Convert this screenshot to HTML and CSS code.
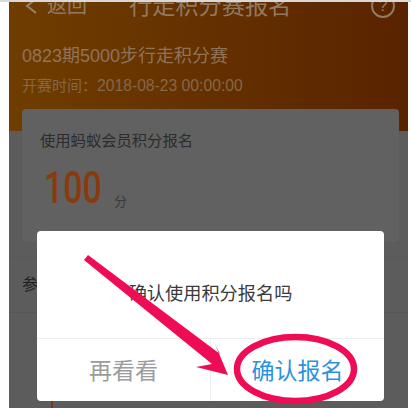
FILE: index.html
```html
<!DOCTYPE html>
<html lang="zh">
<head>
<meta charset="utf-8">
<title>行走积分赛报名</title>
<link rel="stylesheet" href="styles.css">
</head>
<body>
<div class="topline"></div>
<main class="screen">
  <div class="soft">
    <section class="hero">
      <nav class="nav">
        <svg class="back" viewBox="0 0 14 18" aria-hidden="true"><path d="M12 2 L3 9 L12 16"/></svg>
        <span class="back-text">返回</span>
        <span class="title">行走积分赛报名</span>
        <span class="help">?</span>
      </nav>
      <h1 class="name">0823期5000步行走积分赛</h1>
      <p class="time">开赛时间：<span class="date">2018-08-23 00:00:00</span></p>
    </section>
    <section class="card">
      <p class="card-label">使用蚂蚁会员积分报名</p>
      <p class="points"><span class="num">100</span><span class="unit">分</span></p>
    </section>
    <section class="list-row"><span>参赛</span></section>
    <div class="tick"></div>
    <div class="dialog">
      <p class="msg">确认使用积分报名吗</p>
      <div class="actions">
        <span class="btn btn-cancel">再看看</span>
        <span class="btn btn-ok">确认报名</span>
      </div>
    </div>
    <svg class="mark" viewBox="0 0 399 406" aria-hidden="true">
      <polygon class="mark-fill" points="75,258 79,253 211,352 206,342 219,373 187,365 203,362"/>
      <ellipse class="mark-ring" cx="286.5" cy="367" rx="58.5" ry="32"/>
    </svg>
  </div>
</main>
</body>
</html>
```
FILE: styles.css
```css
* { box-sizing: border-box; }
html, body { margin: 0; padding: 0; background: #fff; }
body { width: 411px; height: 408px; overflow: hidden; font-family: "Liberation Sans", "Noto Sans CJK SC", sans-serif; }
.topline { height: 2px; background: #d9d9d9; }
.screen { position: relative; width: 399px; height: 406px; margin-left: 9px; overflow: hidden; background: #5c5c5c; }
.soft { position: relative; filter: blur(0.6px); height: 100%; }
.hero { height: 129px; padding: 0 13px; background: linear-gradient(90deg, #6f3d00, #5a2300); color: #927a60; overflow: hidden; }
.nav { position: relative; display: flex; align-items: center; height: 16px; }
.back { width: 14px; height: 18px; margin: -8px 0 0 2px; fill: none; stroke: #97826b; stroke-width: 2; }
.back-text { margin: -8px 0 0 9px; font-size: 20px; line-height: 24px; }
.title { position: absolute; left: 107px; top: -8px; font-size: 23.2px; line-height: 24px; white-space: nowrap; }
.help { position: absolute; right: 0; top: -8px; width: 24px; height: 24px; border: 2px solid #927a60; border-radius: 50%; font-size: 16px; line-height: 20px; text-align: center; }
.name { margin: 26px 0 0; font-size: 18px; line-height: 24px; font-weight: 400; color: #8f7459; white-space: nowrap; }
.time { margin: 9px 0 0; font-size: 15px; line-height: 18px; color: #866749; white-space: nowrap; }
.date { font-size: 15.7px; }
.card { position: absolute; left: 13px; top: 107px; width: 377px; height: 133px; padding: 22px 18px 0; background: #616161; border-radius: 4px; }
.card-label { margin: 0; font-size: 15.3px; line-height: 20px; color: #2c2c2c; }
.points { display: flex; align-items: flex-end; margin: 15px 0 0 4px; height: 44px; }
.num { margin-right: -17px; font-size: 44px; line-height: 44px; font-weight: 500; font-family: Roboto, sans-serif; color: #8a3a0c; transform: scaleX(0.77); transform-origin: left center; }
.unit { margin: 0 0 0 12px; font-size: 13px; line-height: 16px; color: #3b3b3b; }
.list-row { position: absolute; left: 0; right: 0; top: 255px; height: 56px; padding: 15px 0 0 13px; border-top: 1px solid #585858; border-bottom: 1px solid #555; font-size: 16px; line-height: 24px; color: #1f1f1f; }
.tick { position: absolute; left: 42px; top: 396px; width: 2px; height: 10px; background: #7a3712; }
.dialog { position: absolute; left: 28px; top: 229px; width: 347px; height: 170px; background: #fff; border-radius: 4px; display: flex; flex-direction: column; }
.msg { margin: 0; height: 108px; padding-top: 51px; text-align: center; font-size: 18.2px; line-height: 24px; color: #3a3a3a; border-bottom: 1px solid #eee; }
.actions { display: flex; flex: 1; }
.btn { display: flex; flex: 1; align-items: center; justify-content: center; padding-bottom: 2px; font-size: 23px; }
.btn-cancel { color: #9c9c9c; border-right: 1px solid #eee; }
.btn-ok { color: #2b93dc; }
.mark { position: absolute; left: 0; top: 0; width: 399px; height: 406px; pointer-events: none; }
.mark-fill { fill: #ee0c55; }
.mark-ring { fill: none; stroke: #ee0c55; stroke-width: 6.5; }
```
